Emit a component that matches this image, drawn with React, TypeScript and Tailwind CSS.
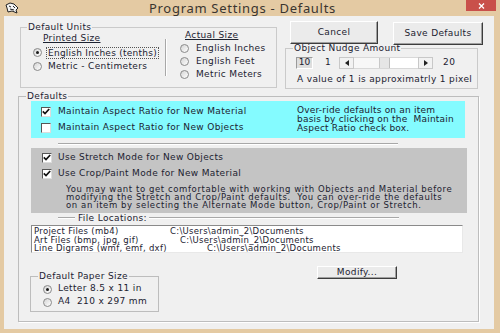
import React from "react";

const Radio = ({ checked }: { checked?: boolean }) => (
  <span className="inline-flex h-[9px] w-[9px] shrink-0 items-center justify-center rounded-full border border-[#8a8a8a] bg-gradient-to-br from-[#d4d4d4] to-white">
    {checked && <span className="h-[3px] w-[3px] rounded-full bg-[#1a1a1a]" />}
  </span>
);

const Check = ({ checked }: { checked?: boolean }) => (
  <span className="inline-flex h-[10px] w-[10px] shrink-0 items-center justify-center border border-b-[#dcdcdc] border-l-[#555] border-r-[#dcdcdc] border-t-[#555] bg-white">
    {checked && (
      <svg width="8" height="7" viewBox="0 0 8 7">
        <path d="M0.8 3.4 L3 5.6 L7.2 1" stroke="#111" strokeWidth="1.7" fill="none" />
      </svg>
    )}
  </span>
);

const Btn = ({ children, cls }: { children: React.ReactNode; cls: string }) => (
  <div
    className={
      "flex items-center justify-center border border-b-[#3c3c3c] border-l-white border-r-[#3c3c3c] border-t-white bg-[#ebebeb] shadow-[inset_-1px_-1px_0_#a0a0a0] " +
      cls
    }
  >
    {children}
  </div>
);

const Arrow = ({ dir }: { dir: "l" | "r" }) => (
  <div className="flex h-full w-[15px] items-center justify-center border border-[#c8c8c8] bg-[#f2f2f2]">
    <svg width="4" height="6" viewBox="0 0 4 6">
      {dir === "l" ? <path d="M4 0 L0 3 L4 6 Z" fill="#222" /> : <path d="M0 0 L4 3 L0 6 Z" fill="#222" />}
    </svg>
  </div>
);

export default function App() {
  return (
    <div className="flex h-[333px] w-[500px] flex-col overflow-hidden bg-[#e4caa3] font-['DejaVu_Sans',sans-serif] text-[9px] tracking-[0.35px] text-[#1c2230]">
      {/* Title bar */}
      <div className="flex h-[16px] items-start tracking-normal">
        <div className="ml-[5px] mt-[2px] w-[14px]">
          <svg width="14" height="12" viewBox="0 0 14 12">
            <path d="M1 3 L5 1 L9 2 L13 6 L11 8 L12 11 L7 9 L3 10 L2 6 Z" fill="#f4f4f4" stroke="#222" strokeWidth="1" />
            <path d="M4 4 L6 5 M8 4 L10 6 M5 7 L9 8" stroke="#222" strokeWidth="1" />
          </svg>
        </div>
        <div className="mt-[-1px] flex-1 text-center font-['Noto_Sans',sans-serif] text-[13px] leading-[18px] tracking-[0.7px] text-[#3a3530]">
          Program Settings - Defaults
        </div>
        <div className="mr-[4px] flex h-[11px] w-[30px] items-center justify-center bg-[#c9504a]">
          <svg width="7" height="6" viewBox="0 0 7 6">
            <path d="M1 0.5 L6 5.5 M6 0.5 L1 5.5" stroke="#fff" strokeWidth="1.3" />
          </svg>
        </div>
      </div>

      {/* Client area */}
      <div className="mb-[4px] ml-[4px] mr-[6px] flex-1 bg-[#f0f0f0] pl-[14px]">
        {/* Top row */}
        <div className="flex items-start">
          {/* Default Units */}
          <fieldset className="ml-[2px] mt-[6px] h-[66px] w-[257px] border border-[#cacaca]">
            <legend className="ml-[6px] px-[1px] leading-[11px]">Default Units</legend>
            <div className="flex pl-[12px]">
              <div className="flex w-[132px] flex-col">
                <div className="ml-[10px] h-[11px] leading-[11px] underline">Printed Size</div>
                <div className="mt-[2px] flex h-[13px] items-center">
                  <Radio checked />
                  <span className="ml-[4px] border border-dotted border-[#555] px-[1px] leading-[10px] tracking-[0.25px]">English Inches (tenths)</span>
                </div>
                <div className="mt-[1px] flex h-[13px] items-center">
                  <Radio />
                  <span className="ml-[6px]">Metric - Centimeters</span>
                </div>
              </div>
              <div className="mt-[6px] h-[37px] w-[2px] border-l border-r border-l-[#a8a8a8] border-r-white" />
              <div className="ml-[13px] flex flex-col">
                <div className="ml-[5px] mt-[-3px] h-[11px] leading-[11px] underline">Actual Size</div>
                <div className="mt-[1px] flex h-[13px] items-center">
                  <Radio />
                  <span className="ml-[7px]">English Inches</span>
                </div>
                <div className="flex h-[13px] items-center">
                  <Radio />
                  <span className="ml-[7px]">English Feet</span>
                </div>
                <div className="flex h-[13px] items-center">
                  <Radio />
                  <span className="ml-[7px]">Metric Meters</span>
                </div>
              </div>
            </div>
          </fieldset>

          {/* Right column */}
          <div className="ml-[8px] flex w-[198px] flex-col">
            <div className="mt-[5px] flex h-[24px] items-start">
              <Btn cls="ml-[5px] h-[23px] w-[88px]">Cancel</Btn>
              <Btn cls="ml-[15px] mt-[1px] h-[23px] w-[90px]">Save Defaults</Btn>
            </div>
            <fieldset className="mt-[-2px] h-[46px] w-[193px] border border-[#cacaca]">
              <legend className="ml-[7px] px-[1px] leading-[10px]">Object Nudge Amount</legend>
              <div className="pl-[10px]">
                <div className="mt-[4px] flex h-[12px] items-center">
                  <div className="flex h-[12px] w-[17px] items-center justify-center border border-b-white border-l-[#9a9a9a] border-r-white border-t-[#9a9a9a] bg-[#dedede] tracking-normal">
                    10
                  </div>
                  <span className="ml-[12px]">1</span>
                  <div className="ml-[8px] flex h-[12px] w-[94px]">
                    <Arrow dir="l" />
                    <div className="flex flex-1 border-y border-[#d8d8d8] bg-white">
                      <div className="w-[26px] border-r border-[#c8c8c8] bg-[#f7f7f7]" />
                      <div className="w-[10px] border-r border-[#bdbdbd] bg-[#e6e6e6]" />
                      <div className="flex-1" />
                    </div>
                    <Arrow dir="r" />
                  </div>
                  <span className="ml-[10px]">20</span>
                </div>
                <div className="ml-[1px] mt-[5px] leading-[10px]">A value of 1 is approximatrly 1 pixel</div>
              </div>
            </fieldset>
          </div>
        </div>

        {/* Defaults */}
        <fieldset className="mt-[2px] h-[231px] w-[461px] border border-[#bdbdbd] shadow-[1px_1px_0_#fff]">
          <legend className="ml-[7px] px-[1px] leading-[10px]">Defaults</legend>
          <div className="pl-[12px]">
            {/* Cyan panel */}
            <div className="flex h-[37px] w-[434px] bg-[#84fbff] pt-[5px]">
              <div className="flex w-[266px] flex-col pl-[10px]">
                <div className="flex h-[11px] items-center">
                  <Check checked />
                  <span className="ml-[7px]">Maintain Aspect Ratio for New Material</span>
                </div>
                <div className="mt-[5px] flex h-[11px] items-center">
                  <Check />
                  <span className="ml-[7px]">Maintain Aspect Ratio for New Objects</span>
                </div>
              </div>
              <div className="leading-[9px] tracking-[0.2px]">
                Over-ride defaults on an item
                <br />
                basis by clicking on the&nbsp; Maintain
                <br />
                Aspect Ratio check box.
              </div>
            </div>

            {/* Separator */}
            <div className="ml-[27px] mt-[5px] h-[2px] w-[340px] border-b border-t border-b-white border-t-[#a8a8a8]" />

            {/* Gray panel */}
            <div className="mt-[3px] flex h-[65px] w-[436px] flex-col bg-[#c4c4c4] pl-[11px] pt-[4px]">
              <div className="flex h-[11px] items-center">
                <Check checked />
                <span className="ml-[6px]">Use Stretch Mode for New Objects</span>
              </div>
              <div className="mt-[5px] flex h-[11px] items-center">
                <Check checked />
                <span className="ml-[6px]">Use Crop/Paint Mode for New Material</span>
              </div>
              <div className="ml-[24px] mt-[6px] text-[8.5px] leading-[8px] tracking-[0.6px]">
                You may want to get comfortable with working with Objects and Material before
                <br />
                modifying the Stretch and Crop/Paint defaults.&nbsp; You can over-ride the defaults
                <br />
                on an item by selecting the Alternate Mode button, Crop/Paint or Stretch.
              </div>
            </div>

            {/* File Locations */}
            <div className="flex h-[10px] items-center">
              <div className="ml-[27px] h-[2px] w-[17px] border-b border-t border-b-white border-t-[#a8a8a8]" />
              <span className="ml-[3px] leading-[10px]">File Locations:</span>
              <div className="ml-[2px] h-[2px] w-[250px] border-b border-t border-b-white border-t-[#a8a8a8]" />
            </div>

            {/* List box */}
            <div className="mt-[2px] h-[28px] w-[432px] border border-b-[#e8e8e8] border-l-[#8a8a8a] border-r-[#e8e8e8] border-t-[#8a8a8a] bg-white pl-[2px] pt-[1px] text-[8.5px] leading-[8.5px] tracking-[0.3px]">
              <div className="flex">
                <span className="w-[136px]">Project Files (mb4)</span>
                <span>C:\Users\admin_2\Documents</span>
              </div>
              <div className="flex">
                <span className="w-[146px]">Art Files (bmp, jpg, gif)</span>
                <span>C:\Users\admin_2\Documents</span>
              </div>
              <div className="flex">
                <span className="w-[173px]">Line Digrams (wmf, emf, dxf)</span>
                <span>C:\Users\admin_2\Documents</span>
              </div>
            </div>

            {/* Bottom row */}
            <div className="flex items-start">
              <fieldset className="ml-[-1px] mt-[18px] h-[41px] w-[129px] border border-[#bdbdbd]">
                <legend className="ml-[7px] px-[1px] leading-[10px]">Default Paper Size</legend>
                <div className="pl-[12px] pt-[3px]">
                  <div className="flex h-[10px] items-center">
                    <Radio checked />
                    <span className="ml-[6px]">Letter 8.5 x 11 in</span>
                  </div>
                  <div className="mt-[3px] flex h-[10px] items-center">
                    <Radio />
                    <span className="ml-[6px]">A4&nbsp; 210 x 297 mm</span>
                  </div>
                </div>
              </fieldset>
              <Btn cls="ml-[158px] mt-[13px] h-[13px] w-[80px]">Modify...</Btn>
            </div>
          </div>
        </fieldset>
      </div>
    </div>
  );
}
